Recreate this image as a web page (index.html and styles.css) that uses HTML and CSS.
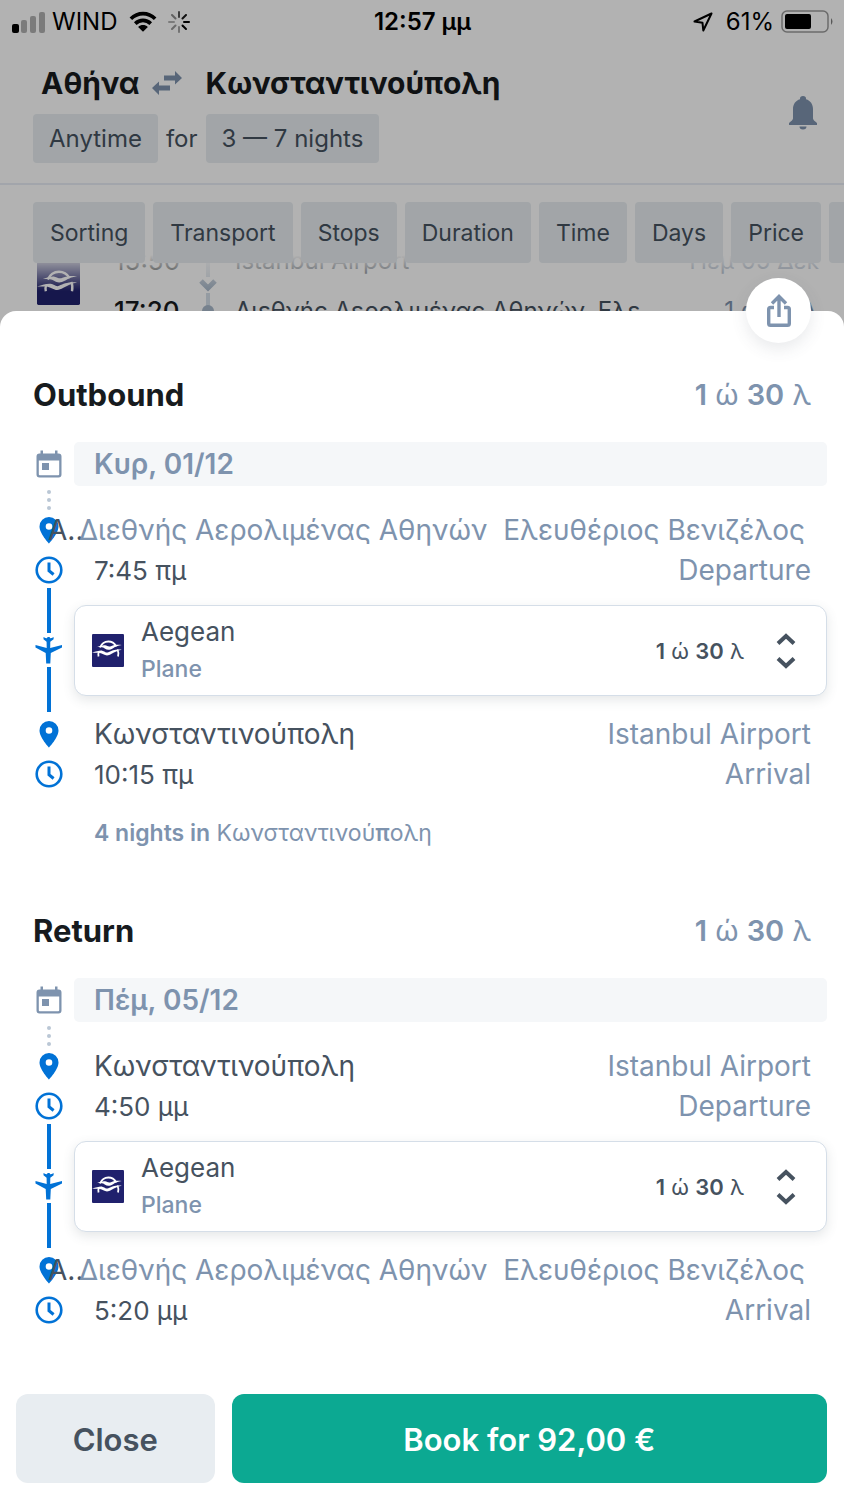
FILE: index.html
```html
<!DOCTYPE html>
<html lang="en">
<head>
<meta charset="utf-8">
<meta name="viewport" content="width=device-width, initial-scale=1">
<title>Trip details</title>
<link rel="stylesheet" href="styles.css">
</head>
<body>
<svg class="sprite" aria-hidden="true">
  <symbol id="calendar" viewBox="0 0 28 28"><path fill="currentColor" fill-rule="evenodd" d="M5.500 3.500V.5h2.500v3h12v-3h2.500v3H23.500Q26.500 3.500 26.500 6.500V24.500Q26.500 27.500 23.500 27.500H4.500Q1.500 27.500 1.500 24.500V6.500Q1.500 3.500 4.500 3.500zM3.800 10.500v13.700q0 1 1 1H23.200q1 0 1-1V10.500zM7 13h7v7H7z"/></symbol>
  <symbol id="pin" viewBox="0 0 28 28"><path fill="currentColor" fill-rule="evenodd" d="M14 1a9.500 9.500 0 0 0-9.500 9.500C4.500 17.500 14 27.500 14 27.500S23.500 17.500 23.500 10.500A9.500 9.500 0 0 0 14 1zm0 6.200a3.300 3.300 0 1 1 0 6.600 3.300 3.300 0 0 1 0-6.600z"/></symbol>
  <symbol id="clock" viewBox="0 0 28 28"><g fill="none" stroke="currentColor"><circle cx="14" cy="14" r="12.300" stroke-width="2.600"/><path stroke-width="3" d="M14 6.500v8.200l4.600 3.800"/></g></symbol>
  <symbol id="plane" viewBox="0 0 28 28"><path fill="currentColor" d="M8.500 1q2 1.200 3.500 1.200L12.600 1h2l.5 1.200q1.700 0 3.500-1.200v2.200l-3.300 2.500-.1 6.200L27 9v2.400L15.800 17l-.5 10.500h-4.100L10.700 17 .5 11.400V9l11.200 2.900-.1-6.200L8.500 3.200z"/></symbol>
  <symbol id="aegean" viewBox="0 0 44 44">
    <rect width="44" height="44" rx="1.500" fill="#20216d"/>
    <path fill="none" stroke="#fff" stroke-width="2.400" d="M11 18C13.500 12.500 17.500 10 22.500 10S31 12.500 33.500 16.500M9.500 23.500C8.500 25.500 8.500 27.500 9 30M35 20.500c1.500 3 1.500 6 .8 9.500"/>
    <path fill="#fff" d="M6 17.500c5-1.500 8.500-3 12-2.500 3 .4 4.500 2.700 8 1.200 5-1.800 8.500-2.200 15-1.500-5.500.8-8.500 2.200-12 4.200-5 2.700-8 2.500-11.500.3-3-1.800-6-1.700-11.500-1.700zM0 25c6-1.800 10-3.200 14-2.800 3.500.4 5 3.500 8.500 2.200 5-2.200 9-4.200 18.500-3.500-6.500 1.300-9.500 3-14 5.500-5 3-8 2.500-11.500.6-4.500-2.500-8-2-15.500-2z"/>
  </symbol>
</svg>

<div class="backdrop">
  <div class="status">
    <div class="status-left">
      <svg width="34" height="24" viewBox="0 0 34 24" aria-hidden="true"><rect x="1" y="14" width="7" height="9" rx="2"/><g opacity=".3"><rect x="10" y="10" width="6" height="13" rx="2"/><rect x="19" y="6" width="6" height="17" rx="2"/><rect x="28" y="2" width="6" height="21" rx="2"/></g></svg>
      <span>WIND</span>
      <svg class="wifi" width="28" height="22" viewBox="0 0 30 22" aria-hidden="true"><g fill="none" stroke="#000" stroke-width="4"><path d="M2 7.500C9.500.3 20.500.3 28 7.500M6.700 12.700c4.800-4.600 11.800-4.600 16.600 0"/></g><path d="M9.800 16.300c3-2.700 7.400-2.700 10.400 0L15 21.500z"/></svg>
      <svg width="22" height="22" viewBox="0 0 22 22" aria-hidden="true"><g stroke="#000" stroke-width="2" stroke-linecap="round"><path d="M11 1v5" opacity=".65"/><path d="m18 4-3.500 3.500" opacity=".9"/><path d="M21 11h-5"/><path d="m18 18-3.500-3.500"/><path d="M11 21v-5" opacity=".35"/><path d="m4 18 3.500-3.500" opacity=".4"/><path d="M1 11h5" opacity=".3"/><path d="m4 4 3.500 3.500" opacity=".45"/></g></svg>
    </div>
    <strong class="status-time">12:57 μμ</strong>
    <div class="status-right">
      <svg class="locate" width="20" height="20" viewBox="0 0 20 20" aria-hidden="true"><path fill="none" stroke="#000" stroke-width="2" stroke-linejoin="round" d="M18.500 1.500 1.500 9.500l8 1.300.8 7.700z"/></svg>
      <span>61%</span>
      <svg width="53" height="24" viewBox="0 0 53 24" aria-hidden="true"><rect x="1" y="1" width="46" height="21" rx="5" fill="none" stroke="#000" stroke-width="1.500" opacity=".4"/><rect x="4" y="4" width="26" height="15" rx="2"/><path d="M50 8q3 3.500 0 7z" opacity=".5"/></svg>
    </div>
  </div>

  <header class="search">
    <div>
      <h1 class="route"><span>Αθήνα</span>
        <svg width="30" height="24" viewBox="0 0 30 24" role="img" aria-label="to and from"><path fill="#7e93ae" d="M12 4.500h11V0l7 7-7 6.500V9.500H12zM18 14.500H7v-4L0 17l7 7v-4.500h11z"/></svg>
        <span>Κωνσταντινούπολη</span></h1>
      <div class="when">
        <button type="button" class="pill">Anytime</button>
        <span>for</span>
        <button type="button" class="pill">3 — 7 nights</button>
      </div>
    </div>
    <button type="button" class="bell" aria-label="Price alerts"><svg width="28" height="34" viewBox="0 0 28 34" aria-hidden="true"><path fill="#7e93ae" d="M14 0a3 3 0 0 1 3 3.200c4.500 1.300 7 5 7 9.800v9.500q0 1.500 4 4.500v2H0v-2q4-3 4-4.500V13c0-4.800 2.500-8.500 7-9.800A3 3 0 0 1 14 0zM10.500 30.500h7a3.500 3 0 0 1-7 0z"/></svg></button>
  </header>

  <nav class="filters" aria-label="Filters">
    <button type="button">Sorting</button>
    <button type="button">Transport</button>
    <button type="button">Stops</button>
    <button type="button">Duration</button>
    <button type="button">Time</button>
    <button type="button">Days</button>
    <button type="button">Price</button>
    <button type="button" class="more" aria-label="More filters"></button>
  </nav>

  <div class="result">
    <svg width="43" height="43" role="img" aria-label="Aegean"><use href="#aegean"/></svg>
    <div class="result-times"><span>15:50</span><b>17:20</b></div>
    <svg class="result-rail" width="18" height="74" viewBox="0 0 18 74" aria-hidden="true"><path stroke="#d5dee8" stroke-width="4" d="M9 0v32M9 48v18"/><path fill="none" stroke="#a9b9cb" stroke-width="5" d="m2 36 7 7 7-7"/><circle cx="9" cy="66" r="6" fill="#a9b9cb"/></svg>
    <div class="result-places"><span>Istanbul Airport</span><span>Διεθνής Αερολιμένας Αθηνών, Ελε</span></div>
    <div class="result-info"><span>Πεμ 05 Δεκ</span><span>1 ώ 30 λ</span></div>
  </div>
</div>

<main class="sheet">
  <button type="button" class="share" aria-label="Share"><svg width="26" height="34" viewBox="0 0 26 34" aria-hidden="true"><g fill="none" stroke="#7e93ae" stroke-width="3.400"><path d="M8 13.500H4.500Q2.700 13.500 2.700 15.300V29.500Q2.700 31.300 4.500 31.300H21.500Q23.300 31.300 23.300 29.500V15.300Q23.300 13.500 21.500 13.500H18"/><path d="M13 23V4M6 9.500l7-7 7 7"/></g></svg></button>

  <section class="leg">
    <header class="leg-head"><h2>Outbound</h2><p><b>1</b> ώ <b>30</b> λ</p></header>
    <div class="row"><svg class="icon muted"><use href="#calendar"/></svg><h3 class="date">Κυρ, 01/12</h3></div>
    <div class="dots"><i></i><i></i><i></i></div>
    <div class="row stop stop-long"><svg class="icon"><use href="#pin"/></svg><p class="line place"><span>Α..</span><span>Διεθνής Αερολιμένας Αθηνών  Ελευθέριος Βενιζέλος</span></p></div>
    <div class="row stop"><svg class="icon"><use href="#clock"/></svg><p class="line"><span>7:45 πμ</span><span>Departure</span></p></div>
    <div class="row travel">
      <div class="rail"><svg class="icon"><use href="#plane"/></svg></div>
      <button type="button" class="card">
        <svg width="32" height="33" viewBox="0 0 44 44" preserveAspectRatio="none" aria-hidden="true"><use href="#aegean"/></svg>
        <span class="carrier"><span>Aegean</span><small>Plane</small></span>
        <span class="duration"><b>1</b> ώ <b>30</b> λ</span>
        <svg width="20" height="36" viewBox="0 0 20 36" aria-hidden="true"><path fill="none" stroke="#46525f" stroke-width="4" d="m2 10.500 8-7.500 8 7.500M2 25.500l8 7.500 8-7.500"/></svg>
      </button>
    </div>
    <div class="row stop"><svg class="icon"><use href="#pin"/></svg><p class="line place"><span>Κωνσταντινούπολη</span><span>Istanbul Airport</span></p></div>
    <div class="row stop"><svg class="icon"><use href="#clock"/></svg><p class="line"><span>10:15 πμ</span><span>Arrival</span></p></div>
    <p class="nights"><b>4 nights in</b> Κωνσταντινού<b>π</b>ολη</p>
  </section>

  <section class="leg">
    <header class="leg-head"><h2>Return</h2><p><b>1</b> ώ <b>30</b> λ</p></header>
    <div class="row"><svg class="icon muted"><use href="#calendar"/></svg><h3 class="date">Πέμ, 05/12</h3></div>
    <div class="dots"><i></i><i></i><i></i></div>
    <div class="row stop"><svg class="icon"><use href="#pin"/></svg><p class="line place"><span>Κωνσταντινούπολη</span><span>Istanbul Airport</span></p></div>
    <div class="row stop"><svg class="icon"><use href="#clock"/></svg><p class="line"><span>4:50 μμ</span><span>Departure</span></p></div>
    <div class="row travel">
      <div class="rail"><svg class="icon"><use href="#plane"/></svg></div>
      <button type="button" class="card">
        <svg width="32" height="33" viewBox="0 0 44 44" preserveAspectRatio="none" aria-hidden="true"><use href="#aegean"/></svg>
        <span class="carrier"><span>Aegean</span><small>Plane</small></span>
        <span class="duration"><b>1</b> ώ <b>30</b> λ</span>
        <svg width="20" height="36" viewBox="0 0 20 36" aria-hidden="true"><path fill="none" stroke="#46525f" stroke-width="4" d="m2 10.500 8-7.500 8 7.500M2 25.500l8 7.500 8-7.500"/></svg>
      </button>
    </div>
    <div class="row stop stop-long"><svg class="icon"><use href="#pin"/></svg><p class="line place"><span>Α..</span><span>Διεθνής Αερολιμένας Αθηνών  Ελευθέριος Βενιζέλος</span></p></div>
    <div class="row stop"><svg class="icon"><use href="#clock"/></svg><p class="line"><span>5:20 μμ</span><span>Arrival</span></p></div>
  </section>

  <footer class="actions">
    <button type="button" class="close">Close</button>
    <button type="button" class="book">Book for 92,00 €</button>
  </footer>
</main>
</body>
</html>
```

FILE: styles.css
```css
:root {
  --ink: #46525f;
  --muted: #7e93ae;
  --blue: #0172d6;
  --cloud: #e8edf1;
}

* { box-sizing: border-box; }

body {
  display: flex;
  flex-direction: column;
  min-height: 100vh;
  margin: 0;
  overflow-x: hidden;
  background: #fff;
  color: var(--ink);
  font-family: Inter, "Noto Sans", sans-serif;
  font-size: 26px;
  line-height: 32px;
}

h1, h2, h3, p { margin: 0; }
svg { display: block; flex: none; }
b { font-weight: 600; }
.sprite { position: absolute; width: 0; height: 0; }

button {
  padding: 0;
  border: 0;
  font: inherit;
  color: inherit;
  cursor: pointer;
}

/* Search results, dimmed behind the sheet */
.backdrop {
  position: relative;
  height: 327px;
  overflow: hidden;
}

.backdrop::after {
  content: "";
  position: absolute;
  inset: 0;
  z-index: 2;
  background: rgba(0, 0, 0, .3);
}

.status {
  display: grid;
  grid-template-columns: 1fr auto 1fr;
  align-items: center;
  height: 42px;
  padding: 2px 10px 0 11px;
  color: #000;
  font-size: 24px;
}

.status-left, .status-right { display: flex; align-items: center; gap: 7px; }
.status-right { justify-content: flex-end; }
.status-left .wifi { margin: 0 4px; }
.status-right .locate { margin-right: 6px; }
.status-time { font-weight: 600; }

.search {
  display: flex;
  align-items: center;
  justify-content: space-between;
  padding: 21px 27px 20px 33px;
  border-bottom: 2px solid #e8edf5;
}

.route {
  display: flex;
  align-items: center;
  gap: 12px;
  padding-left: 8px;
  color: #171b1e;
  font-size: 30px;
  line-height: 40px;
}

.route svg + span { margin-left: 12px; }

.when {
  display: flex;
  align-items: center;
  gap: 8px;
  margin-top: 11px;
  font-size: 24px;
}

.pill {
  height: 49px;
  padding: 0 16px;
  border-radius: 4px;
  background: var(--cloud);
}

.bell { background: none; }

.filters {
  position: relative;
  z-index: 1;
  display: flex;
  gap: 8px;
  height: 106px;
  padding: 17px 0 0 33px;
  background: linear-gradient(#fff 66%, rgba(255, 255, 255, 0));
}

.filters button {
  flex: none;
  height: 61px;
  padding: 0 17px;
  border-radius: 4px;
  background: var(--cloud);
  font-size: 23px;
}

.filters .more { width: 120px; }

.result {
  display: flex;
  align-items: flex-start;
  margin-top: -46px;
  padding: 0 25px 0 37px;
}

.result > svg:first-child { margin-top: 17px; }
.result-times, .result-places, .result-info { display: flex; flex-direction: column; gap: 18px; }
.result-times { width: 119px; padding-left: 34px; color: #171b1e; }
.result-times b { font-weight: 500; }
.result-rail { width: 18px; }
.result-places { flex: 1; padding-left: 18px; white-space: nowrap; font-size: 24px; }
.result-info { color: var(--muted); text-align: right; font-size: 24px; }

/* Trip details sheet */
.sheet {
  position: relative;
  z-index: 3;
  display: flex;
  flex: 1;
  flex-direction: column;
  gap: 58px;
  margin-top: -16px;
  padding: 60px 17px 17px 24px;
  border-radius: 16px 16px 0 0;
  background: #fff;
}

.share {
  position: absolute;
  top: -33px;
  right: 33px;
  display: grid;
  place-items: center;
  width: 65px;
  height: 65px;
  border-radius: 50%;
  background: #fff;
  box-shadow: 0 6px 16px rgba(70, 82, 95, .12);
}

.leg-head {
  display: flex;
  align-items: center;
  justify-content: space-between;
  height: 48px;
  margin: 0 16px 23px 9px;
  color: var(--muted);
  font-size: 29px;
}

.leg-head h2 { color: #171b1e; font-size: 31px; font-weight: 700; }

.row { display: grid; grid-template-columns: 50px 1fr; align-items: center; }
.icon { width: 28px; height: 28px; justify-self: center; color: var(--blue); }
.icon.muted { color: var(--muted); }

.date {
  height: 44px;
  padding: 0 20px;
  border-radius: 5px;
  background: #f5f7f9;
  color: var(--muted);
  font-size: 28px;
  font-weight: 600;
  line-height: 45px;
}

.dots {
  display: flex;
  flex-direction: column;
  align-items: center;
  gap: 4px;
  width: 50px;
  height: 24px;
  padding-top: 4px;
}

.dots i { width: 4px; height: 4px; border-radius: 50%; background: #bac7d5; }

.stop { height: 40px; }

.line {
  display: flex;
  align-items: baseline;
  justify-content: space-between;
  padding: 0 16px 0 20px;
  white-space: pre;
}

.place { font-size: 28px; }
.line span:last-child { color: var(--muted); font-size: 28px; }
.stop-long .line { padding-right: 24px; }
.stop-long .line span:first-child { width: 31px; margin-left: -46px; }

.travel { align-items: stretch; margin: -2px 0 2px; }

.rail { display: flex; flex-direction: column; align-items: center; gap: 3px; }
.rail::before, .rail::after { content: ""; flex: 1; width: 4px; background: var(--blue); }

.card {
  display: flex;
  align-items: center;
  margin: 17px 0 16px;
  padding: 8px 30px 8px 17px;
  border: 1px solid #d5dee8;
  border-radius: 12px;
  background: #fff;
  box-shadow: 0 4px 12px rgba(70, 82, 95, .14);
  text-align: left;
}

.carrier { display: flex; flex: 1; flex-direction: column; gap: 3px; padding-left: 17px; line-height: 35px; }
.carrier small { color: var(--muted); font-size: 23px; font-weight: 500; }
.duration { margin-right: 32px; font-size: 22px; }

.nights { margin-top: 23px; padding-left: 70px; color: var(--muted); font-size: 23px; }

.actions { display: flex; gap: 17px; margin: auto 0 0 -8px; }

.actions button {
  height: 89px;
  padding-top: 3px;
  border-radius: 12px;
  font-size: 31px;
  font-weight: 600;
}

.close { flex: 1; background: var(--cloud); }
.book { flex: 3; background: #0ca992; color: #fff; }
```
